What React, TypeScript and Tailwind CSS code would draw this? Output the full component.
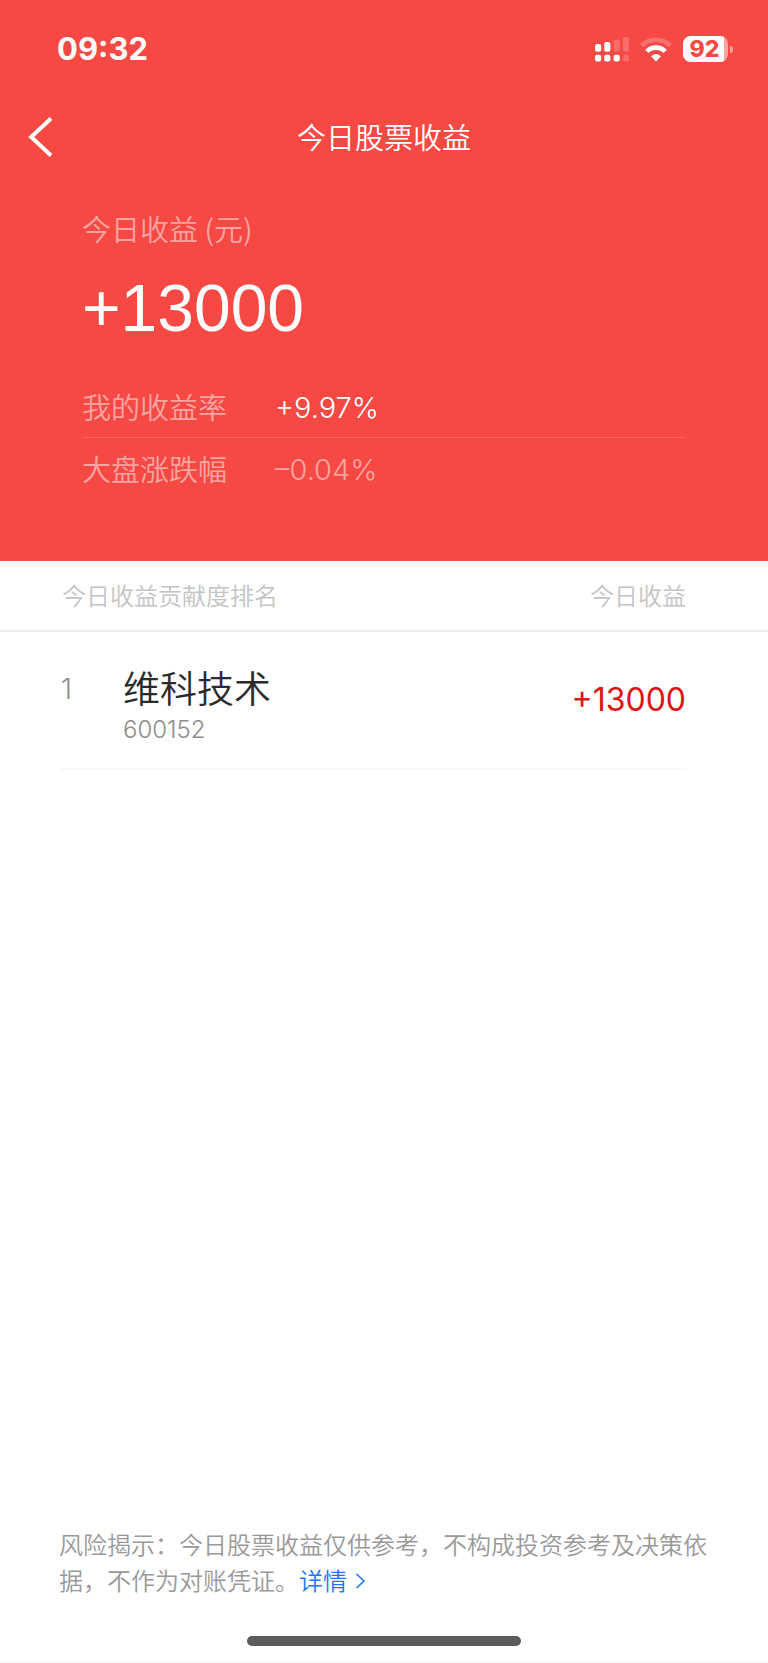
import { ReactNode } from 'react';

const stocks = [{ rank: 1, name: '维科技术', code: '600152', profit: '+13000' }];

function SignalIcon() {
  return (
    <svg width="34" height="25" viewBox="0 0 34 25" fill="#fff" aria-hidden="true">
      <rect x="0" y="7" width="6.2" height="7.8" rx="2" />
      <rect x="9.2" y="5" width="6.2" height="9.8" rx="2" />
      <rect x="18.6" y="2.6" width="6.2" height="12.2" rx="2" opacity=".2" />
      <rect x="27.9" y="0" width="6.1" height="14.8" rx="2" opacity=".2" />
      <rect x="0" y="17.7" width="6.2" height="6.8" rx="2" />
      <rect x="9.2" y="17.7" width="6.2" height="6.8" rx="2" />
      <rect x="18.6" y="17.7" width="6.2" height="6.8" rx="2" />
      <rect x="27.9" y="17.7" width="6.1" height="6.8" rx="2" opacity=".2" />
    </svg>
  );
}

function WifiIcon() {
  return (
    <svg width="32" height="25" viewBox="0 0 32 25" fill="none" aria-hidden="true">
      <path d="M1.8 8.6A20.4 20.4 0 0 1 30.2 8.6" stroke="#fff" strokeWidth="4.6" opacity=".22" />
      <path d="M6.8 14.4A13 13 0 0 1 25.2 14.4" stroke="#fff" strokeWidth="4.6" />
      <path d="M16 24.4 L11.2 19.4 Q13.2 17 16 17 T20.8 19.4 Z" fill="#fff" />
    </svg>
  );
}

function Battery({ level }: { level: number }) {
  return (
    <div className="flex items-center gap-0.5">
      <div className="flex h-[26px] w-[45px] overflow-hidden rounded-lg bg-white/50">
        <span className="flex w-[41px] items-center justify-center bg-white pl-0.5 text-[23px] leading-none font-extrabold text-[#f74944]">
          {level}
        </span>
      </div>
      <span className="h-[7px] w-[3px] rounded-r-full bg-white/50" />
    </div>
  );
}

function StatRow({ label, children }: { label: string; children: ReactNode }) {
  return (
    <div className="flex h-[62px] items-center border-b border-white/15 last:border-b-0">
      <dt className="w-[193px] text-[29px] text-white/50">{label}</dt>
      <dd className="pt-0.5 font-['Inter',sans-serif] text-[29px] font-light">{children}</dd>
    </div>
  );
}

export default function App() {
  return (
    <div className="flex min-h-screen flex-col bg-white font-['Noto_Sans_CJK_SC',sans-serif] font-[350]">
      <header className="bg-[#f74944] pb-[61px] text-white">
        {/* Status bar */}
        <div className="flex h-[98px] items-center justify-between pr-[35px] pl-[57px] font-['Inter',sans-serif]">
          <span className="text-[31px] font-bold">09:32</span>
          <div className="flex items-center gap-[11px]">
            <SignalIcon />
            <WifiIcon />
            <Battery level={92} />
          </div>
        </div>

        {/* Nav */}
        <div className="grid h-[78px] grid-cols-[1fr_auto_1fr] items-center">
          <button type="button" aria-label="返回" className="w-fit pl-7">
            <svg width="26" height="42" viewBox="0 0 26 42" fill="none" stroke="#fff" strokeWidth="4">
              <path d="M23 2.5 L3.2 21 L23 39.5" />
            </svg>
          </button>
          <h1 className="text-[29px] font-[350]">今日股票收益</h1>
        </div>

        <div className="px-[82px] pt-8">
          <p className="text-[29px] leading-10 text-white/50">今日收益 (元)</p>
          <p className="mt-5 font-['Liberation_Sans',sans-serif] text-[66px] leading-20">+13000</p>
          <dl className="mt-7">
            <StatRow label="我的收益率">+9.97%</StatRow>
            <StatRow label="大盘涨跌幅">
              <span className="text-white/50">–0.04%</span>
            </StatRow>
          </dl>
        </div>
      </header>

      {/* Ranking */}
      <main className="grow">
        <table className="w-full border-collapse">
          <thead>
            <tr className="h-[70px] border-b-2 border-[#ededed] text-2xl text-[#c4c4c4]">
              <th colSpan={2} className="p-0 pb-0.5 pl-[62px] text-left font-[350]">今日收益贡献度排名</th>
              <th className="p-0 pr-[82px] pb-0.5 text-right font-[350]">今日收益</th>
            </tr>
          </thead>
          <tbody>
            {stocks.map(s => (
              <tr key={s.code}>
                <td className="w-[123px] p-0 pl-[61px]">
                  <div className="h-[138px] border-b-2 border-[#f8f8f8] pt-8 font-['Inter',sans-serif] text-[28px] leading-[50px] font-light text-[#8c8c8c]">
                    {s.rank}
                  </div>
                </td>
                <td className="p-0">
                  <div className="flex h-[138px] flex-col gap-1 border-b-2 border-[#f8f8f8] pt-8">
                    <div className="text-[37px] leading-[46px] text-[#2b2b2b]">{s.name}</div>
                    <div className="font-['Inter',sans-serif] text-2xl leading-8 font-light text-[#8c8c8c]">{s.code}</div>
                  </div>
                </td>
                <td className="p-0 pr-[82px]">
                  <div className="flex h-[138px] items-center justify-end border-b-2 border-[#f8f8f8] font-['Inter',sans-serif] text-[32px] font-normal text-[#dc1414]">
                    {s.profit}
                  </div>
                </td>
              </tr>
            ))}
          </tbody>
        </table>
      </main>

      <footer>
        <p className="pr-12 pl-[59px] text-2xl leading-9 text-[#999]">
          风险揭示：今日股票收益仅供参考，不构成投资参考及决策依据，不作为对账凭证。
          <a href="#detail" className="text-[#1f74ff]">
            详情
            <svg className="ml-2 inline-block align-[1px]" width="11" height="16" viewBox="0 0 11 16" fill="none" stroke="currentColor" strokeWidth="1.6" aria-hidden="true">
              <path d="M1.5 1 L9 8 L1.5 15" />
            </svg>
          </a>
        </p>
        <div className="flex justify-center border-b border-[#f0f0f0] pt-[38px] pb-4">
          <div className="h-2.5 w-[274px] rounded-full bg-[#5c5c5c]" />
        </div>
      </footer>
    </div>
  );
}
